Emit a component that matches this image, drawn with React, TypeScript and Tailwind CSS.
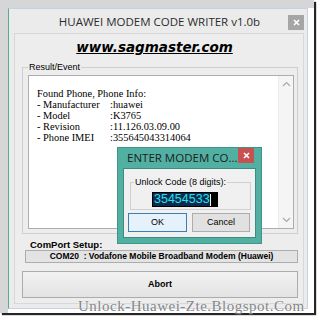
import React from "react";

const XIcon = () => (
  <svg width="7" height="7" viewBox="0 0 7 7">
    <path d="M1 1L6 6M6 1L1 6" stroke="white" strokeWidth="1.6" />
  </svg>
);

const Chevron = ({ up }: { up?: boolean }) => (
  <svg width="9" height="6" viewBox="0 0 9 6">
    <polyline
      points={up ? "1,5 4.5,1.5 8,5" : "1,1 4.5,4.5 8,1"}
      fill="none"
      stroke="#a8a8a8"
      strokeWidth="1.2"
    />
  </svg>
);

const rows: [string, string][] = [
  ["- Manufacturer", ":huawei"],
  ["- Model", ":K3765"],
  ["- Revision", ":11.126.03.09.00"],
  ["- Phone IMEI", ":355645043314064"],
];

export default function App() {
  return (
    <div className="relative w-[320px] h-[320px] bg-white overflow-hidden font-['Liberation_Sans',sans-serif] text-black">
      <div className="w-[314px] h-[313px] bg-white border-t-[8px] border-l-[8px] border-[#d6d6d6] shadow-[2px_2px_1px_rgba(0,0,0,0.85)]">
        <div className="w-[300px] h-[301px] bg-[#ebebeb] border border-[#c5d2e6] border-l-[#56a99b] flex flex-col">
          {/* title bar */}
          <div className="h-[24px] grid grid-cols-[23px_1fr_20px] items-center">
            <div />
            <div className="text-center font-['Open_Sans',sans-serif] text-[11.5px] leading-[14px] text-[#2b2b2b] pt-[2px]">
              HUAWEI MODEM CODE WRITER v1.0b
            </div>
            <div className="flex justify-end pr-[3px] pt-[3px]">
              <div className="w-[16px] h-[15px] bg-[#a5a5a5] flex items-center justify-center">
                <XIcon />
              </div>
            </div>
          </div>
          {/* client panel */}
          <div className="ml-[5px] mr-[3px] h-[271px] border border-[#d8d8d8] bg-[#ededed] flex flex-col">
            <div className="h-[20px] mt-[3px] pr-[9px] flex items-center justify-center">
              <span className="font-['DejaVu_Sans',sans-serif] font-bold italic underline text-[13.5px] leading-[20px]">
                www.sagmaster.com
              </span>
            </div>
            <fieldset className="mt-[4px] ml-[7px] mr-[5px] border border-[#cfcfcf] pl-[5px] pr-[3px] pb-[4px]">
              <legend className="px-[1px] text-[9px] leading-[12px]">Result/Event</legend>
              <div className="mt-[2px] h-[154px] border border-[#abadb3] bg-white flex">
                <div className="flex-1 pl-[8px] pt-[12px] font-['Liberation_Serif',serif] text-[10.4px] leading-[11px]">
                  <div>Found Phone, Phone Info:</div>
                  {rows.map(([k, v]) => (
                    <div key={k} className="grid grid-cols-[73px_1fr]">
                      <span>{k}</span>
                      <span>{v}</span>
                    </div>
                  ))}
                </div>
                <div className="w-[15px] bg-[#f5f5f5] border-l border-[#ececec] flex flex-col items-center justify-between pt-[5px] pb-[5px]">
                  <Chevron up />
                  <Chevron />
                </div>
              </div>
            </fieldset>
            <div className="mt-[5px] ml-[15px] text-[9.5px] leading-[11px] font-bold">ComPort Setup:</div>
            <div className="h-[13px] ml-[10px] mr-[5px] border border-[#adadad] bg-[#e3e3e3] flex items-center justify-center">
              <span className="text-[8.5px] leading-[11px] font-bold whitespace-pre">
                COM20  : Vodafone Mobile Broadband Modem (Huawei)
              </span>
            </div>
            <div className="mt-[8px] h-[27px] ml-[7px] mr-[5px] border border-[#acacac] bg-gradient-to-b from-[#f2f2f2] to-[#e3e3e3] flex items-center justify-center">
              <span className="text-[9px] font-bold">Abort</span>
            </div>
          </div>
        </div>
      </div>

      {/* dialog */}
      <div className="absolute left-[117px] top-[147px] w-[145px] h-[97px] bg-[#52b0a3] border border-[#3f958a] flex flex-col px-[5px] pb-[5px]">
        <div className="h-[20px] flex justify-between items-start">
          <span className="pl-[4px] pt-[3px] font-['Open_Sans',sans-serif] text-[11.5px] leading-[14px] text-[#1c1c1c]">
            ENTER MODEM CO...
          </span>
          <div className="mr-[2px] w-[16px] h-[15px] bg-[#c75050] flex items-center justify-center">
            <XIcon />
          </div>
        </div>
        <div className="h-[70px] bg-[#f0f0f0] border border-[#3b8d82] flex flex-col">
          <fieldset className="mt-[7px] ml-[6px] mr-[4px] border border-[#d0d0d0] pl-[3px] pb-[2px]">
            <legend className="px-[1px] text-[9px] leading-[12px]">Unlock Code (8 digits):</legend>
            <div className="mt-[4px] ml-[18px] w-[66px] h-[15px] bg-black flex items-center pl-[1px]">
              <span className="bg-[#0c2a50] text-[#22e3ea] text-[12.5px] leading-[13px] pl-[1px]">35454533</span>
              <span className="w-[1px] h-[12px] bg-white" />
            </div>
          </fieldset>
          <div className="mt-[3px] ml-[4px] flex gap-[5px]">
            <div className="w-[59px] h-[19px] border border-[#3c7fb1] bg-[#e5f1fb] flex items-center justify-center text-[9px]">
              OK
            </div>
            <div className="w-[58px] h-[19px] border border-[#adadad] bg-[#e1e1e1] flex items-center justify-center text-[9px]">
              Cancel
            </div>
          </div>
        </div>
      </div>

      {/* watermark */}
      <div className="absolute left-[78px] top-[299px] font-['Liberation_Serif',serif] text-[15px] leading-[15px] tracking-[0.5px] text-[#858585] [text-shadow:0_0_2px_white]">
        Unlock-Huawei-Zte.Blogspot.Com
      </div>
    </div>
  );
}
